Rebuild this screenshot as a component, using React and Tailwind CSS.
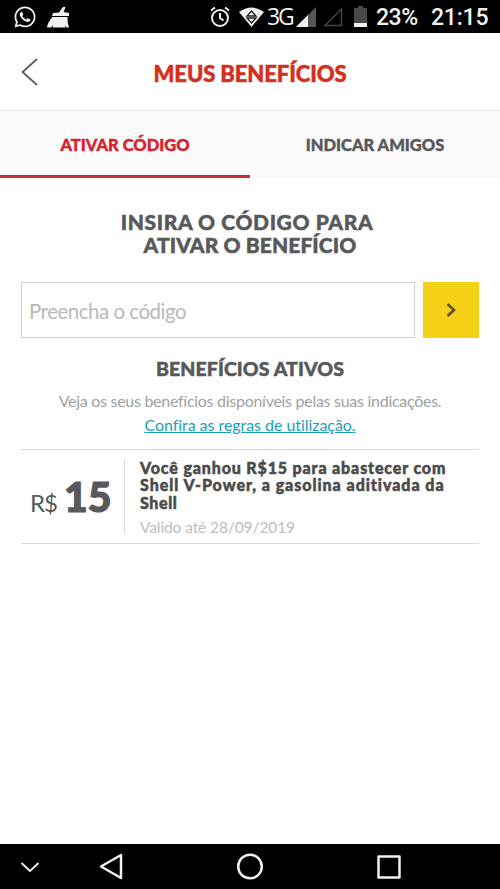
import React, { useState } from 'react';
import { FaWhatsapp } from 'react-icons/fa';

const StatusBar = () => (
    <div className="h-[33px] bg-black text-[#f1f1f1] flex items-center pl-[13px] pr-[11px] shrink-0">
        <FaWhatsapp size={24} />
        <svg className="ml-[9px]" width="24" height="24" viewBox="0 0 24 24" fill="currentColor">
            <path d="M13 7.500 16.500 2.500q2-1.500 3 0l-2 4.500 5.500 1v3H6l1-3z" />
            <path d="M6.500 12h15q-.5 5 1.500 10.500h-2.500L19.500 20v2.500h-13L7 20l-2 2.500H1q1-6 5.500-10.500z" />
        </svg>
        <div className="ml-auto flex items-center">
            <svg width="20" height="22" viewBox="0 0 20 22" fill="none" stroke="currentColor" strokeWidth="2">
                <circle cx="10" cy="12" r="8" />
                <path d="M10 7v5l3.5 2.5M1 4.5 5 1.5M19 4.5 15 1.5" />
            </svg>
            <svg className="ml-[9px]" width="25" height="20" viewBox="0 0 25 20">
                <path d="M0 5Q12.500-4 25 5L12.500 20z" fill="currentColor" />
                <path d="M12.500 4 17 9H8zM8 11h9l-4.500 5z" fill="none" stroke="#222" strokeWidth="1.300" />
            </svg>
            <span className="ml-[3px] w-[27px] font-['Open_Sans'] text-[23px] leading-none tracking-[-2.2px]">3G</span>
            <svg className="ml-[2px]" width="20" height="20" viewBox="0 0 20 20">
                <path d="M20 0v20H0z" fill="#555" />
                <path d="M12 8v12H0z" fill="currentColor" />
            </svg>
            <svg className="ml-[7px]" width="20" height="20" viewBox="0 0 20 20" fill="none" stroke="#444" strokeWidth="1.500">
                <path d="M18.500 2v16.500H2z" />
            </svg>
            <svg className="ml-[11px]" width="13" height="21" viewBox="0 0 13 21">
                <path d="M4 0h5v2h4v19H0V2h4z" fill="#484848" />
                <path d="M0 17h13v4H0z" fill="currentColor" />
            </svg>
            <span className="ml-[9px] w-[43px] pt-[2px] font-[Roboto] font-medium text-[23px] leading-none tracking-[-0.5px]">23%</span>
            <span className="ml-[12px] w-[58px] pt-[2px] font-[Roboto] font-medium text-[23px] leading-none tracking-[-0.2px]">21:15</span>
        </div>
    </div>
);

const Header = () => (
    <header className="h-[77px] flex items-center justify-center relative shrink-0 pt-[5px]">
        <button aria-label="Voltar" className="absolute left-[20px] top-[24px]">
            <svg width="19" height="30" viewBox="0 0 19 30" fill="none" stroke="#5b5b5b" strokeWidth="1.800">
                <path d="M17 2 2.500 15 17 28" />
            </svg>
        </button>
        <h1 className="text-[22px] leading-none font-black text-[#d5301c] tracking-[-0.1px] [-webkit-text-stroke:0.5px]">MEUS BENEFÍCIOS</h1>
    </header>
);

const tabs = ['ATIVAR CÓDIGO', 'INDICAR AMIGOS'];

const Tabs = () => {
    const [active, setActive] = useState(0);

    return (
        <div className="h-[68px] flex bg-[#fafafa] border-t border-[#ececec] shrink-0">
            {tabs.map((tab, i) => (
                <button
                    key={tab}
                    onClick={() => setActive(i)}
                    className={`flex-1 border-b-3 pt-[5px] text-[16.5px] font-black leading-none [-webkit-text-stroke:0.4px] ${active === i ? 'border-[#d02a38] text-[#d5222f]' : 'border-transparent text-[#58595b]'}`}
                >
                    {tab}
                </button>
            ))}
        </div>
    );
};

const Benefit = () => (
    <div className="mt-[12px] h-[95px] border-y border-[#d8d8d8] flex items-center">
        <div className="w-[104px] h-[75px] border-r border-[#d8d8d8] flex items-baseline pl-[9px] pt-[17px] text-[#58595b] leading-none">
            <span className="w-[34px] text-[24px] tracking-[-1px]">R$</span>
            <span className="text-[41px] leading-none font-black [-webkit-text-stroke:1.2px]">15</span>
        </div>
        <div className="pl-[15px] pt-[2px] flex-1 whitespace-nowrap">
            <p className="text-[16px] leading-[17.6px] font-black text-[#4b4b4b] [-webkit-text-stroke:0.5px]">
                <span className="tracking-[0.85px]">Você ganhou R$15 para abastecer com</span><br />
                <span className="tracking-[0.95px]">Shell V-Power, a gasolina aditivada da</span><br />
                <span className="tracking-[0.6px]">Shell</span>
            </p>
            <p className="mt-[7px] text-[15.5px] leading-[18px] tracking-[-0.1px] text-[#bcbcbc]">Valido até 28/09/2019</p>
        </div>
    </div>
);

const NavBar = () => (
    <nav className="h-[45px] bg-black text-[#f0f0f0] shrink-0">
        <svg width="500" height="45" viewBox="0 0 500 45" fill="none" stroke="currentColor" strokeWidth="2.500" strokeLinejoin="round">
            <path d="M21.500 19 30 27l8.500-8" strokeWidth="1.800" />
            <path d="M121 11v23l-20-11.500z" />
            <circle cx="250" cy="22.500" r="11.800" />
            <rect x="378.500" y="12.500" width="21" height="21" />
        </svg>
    </nav>
);

const App = () => {
    const [code, setCode] = useState('');

    return (
        <div className="w-[500px] h-[889px] bg-white flex flex-col overflow-hidden font-[Lato,sans-serif]">
            <StatusBar />
            <Header />
            <Tabs />
            <main className="flex-1 px-[21px] pt-[33px] text-center">
                <h2 className="text-[21px] leading-[22.5px] font-black text-[#58595b] [-webkit-text-stroke:0.5px]">
                    <span className="tracking-[0.6px] pr-[6px]">INSIRA O CÓDIGO PARA</span><br />
                    <span className="tracking-[0.1px]">ATIVAR O BENEFÍCIO</span>
                </h2>
                <div className="mt-[26px] flex gap-2">
                    <input
                        type="text"
                        placeholder="Preencha o código"
                        className="w-[394px] h-[56px] border border-[#d2d2d2] px-[7px] pt-[2px] text-[20.5px] tracking-[-0.5px] text-[#58595b] placeholder:text-[#b9b9b9] outline-none"
                        value={code}
                        onChange={(e) => setCode(e.target.value)}
                    />
                    <button aria-label="Ativar" className="w-[56px] h-[56px] bg-[#f7d117] flex items-center justify-center">
                        <svg width="10" height="16" viewBox="0 0 10 16" fill="none" stroke="#5a5130" strokeWidth="2.800">
                            <path d="M1.500 2 8 8l-6.500 6" />
                        </svg>
                    </button>
                </div>
                <h3 className="mt-[20px] text-[19.5px] leading-[22px] font-black text-[#58595b] tracking-[0.1px] [-webkit-text-stroke:0.5px]">BENEFÍCIOS ATIVOS</h3>
                <p className="mt-[9px] text-[16px] leading-[24px] tracking-[-0.28px] text-[#a0a0a0] whitespace-nowrap">
                    Veja os seus benefícios disponíveis pelas suas indicações.
                </p>
                <a href="#regras" className="block text-[16px] leading-[24px] text-[#1b9fbd] tracking-[-0.05px] underline">Confira as regras de utilização.</a>
                <div className="text-left">
                    <Benefit />
                </div>
            </main>
            <NavBar />
        </div>
    );
};

export default App;
